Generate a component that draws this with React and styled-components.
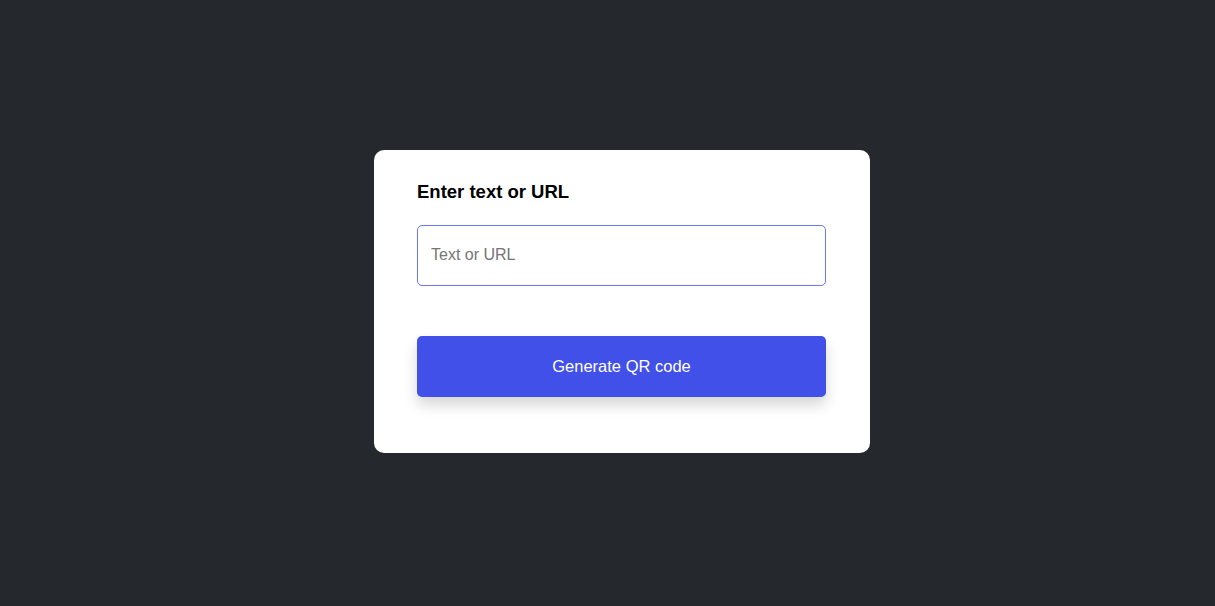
import React from 'react'
import styled, { createGlobalStyle } from 'styled-components'

const GlobalStyle = createGlobalStyle`
  html, body {
    margin: 0;
    padding: 0;
    background: #25292d;
    font-family: "Liberation Sans", Arial, sans-serif;
  }
`

const Page = styled.div`
  min-height: 100vh;
  display: flex;
  align-items: center;
  justify-content: center;
  padding: 0 0 4px 29px;
  box-sizing: border-box;
`

const Card = styled.div`
  width: 496px;
  box-sizing: border-box;
  background: #ffffff;
  border-radius: 10px;
  padding: 31px 44px 56px 43px;
  display: flex;
  flex-direction: column;
`

const Label = styled.label`
  font-size: 18.5px;
  font-weight: bold;
  line-height: 22px;
  color: #000;
  margin-bottom: 22px;
`

const Input = styled.input`
  height: 61px;
  box-sizing: border-box;
  border: 1px solid #6b76f2;
  border-radius: 5px;
  padding: 0 13px;
  font-size: 16px;
  font-family: inherit;
  background: #ffffff;
  outline: none;
  margin-bottom: 50px;

  &::placeholder {
    color: #757575;
  }
`

const Button = styled.button`
  height: 61px;
  border: none;
  border-radius: 5px;
  background: #4150e8;
  color: #ffffff;
  font-size: 16.5px;
  font-family: inherit;
  cursor: pointer;
  box-shadow: 0 8px 14px rgba(0, 0, 0, 0.16);
`

const App = () => {
  return (
    <Page>
      <GlobalStyle />
      <Card>
        <Label htmlFor="qr-text">Enter text or URL</Label>
        <Input id="qr-text" type="text" placeholder="Text or URL" />
        <Button>Generate QR code</Button>
      </Card>
    </Page>
  )
}

export default App
